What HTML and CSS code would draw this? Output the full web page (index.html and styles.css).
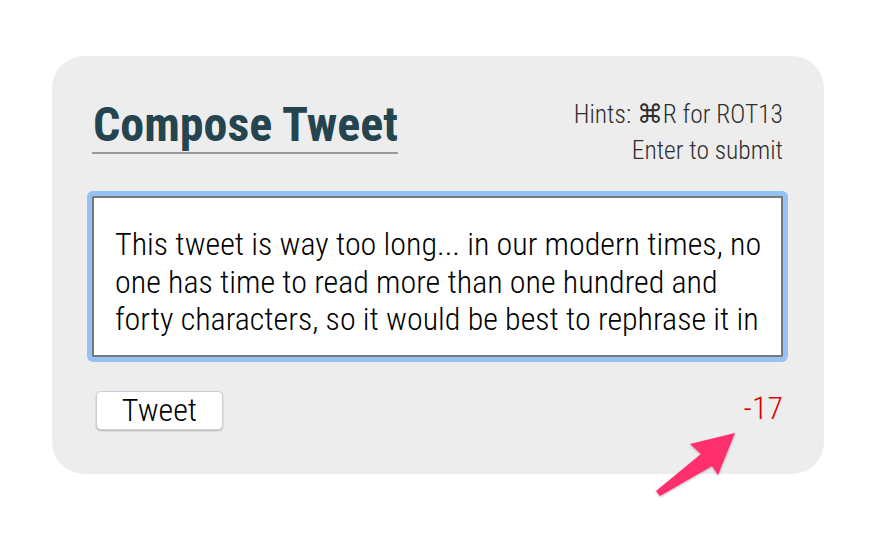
FILE: index.html
```html
<!DOCTYPE html>
<html>
<head>
<meta charset="utf-8">
<link rel="stylesheet" href="styles.css">
</head>
<body>
<div class="card">
  <div class="header">
    <h1 class="title">Compose Tweet</h1>
    <div class="hints">Hints: ⌘R for ROT13<br>Enter to submit</div>
  </div>
  <div class="editor">This tweet is way too long... in our modern times, no<br>one has time to read more than one hundred and<br>forty characters, so it would be best to rephrase it in</div>
  <div class="footer">
    <button class="tweet-btn">Tweet</button>
    <span class="count">-17</span>
  </div>
</div>
<svg class="arrow" width="110" height="90" viewBox="640 420 110 90">
  <defs>
    <filter id="sh" x="-20%" y="-20%" width="140%" height="140%">
      <feDropShadow dx="0" dy="1" stdDeviation="1" flood-color="#000" flood-opacity="0.3"/>
    </filter>
  </defs>
  <polygon filter="url(#sh)" fill="#ff2d6d" points="735,433 690,444 701,454 656,491 660,496 712,466 718,475"/>
</svg>
</body>
</html>
```
FILE: styles.css
```css
html, body {
  margin: 0;
  padding: 0;
  background: #ffffff;
}
body {
  position: relative;
  width: 876px;
  height: 534px;
  overflow: hidden;
  padding-top: 56px;
  padding-left: 52px;
  box-sizing: border-box;
  font-family: "Roboto Condensed", "Roboto", sans-serif;
}
.card {
  width: 772px;
  height: 418px;
  box-sizing: border-box;
  background: #ededed;
  border-radius: 32px;
  padding: 40px 41px 44px 40px;
  display: flex;
  flex-direction: column;
}
.header {
  display: flex;
  justify-content: space-between;
  align-items: flex-start;
  flex-shrink: 0;
}
.title {
  margin: 2px 0 0 0;
  font-size: 48px;
  font-weight: 700;
  line-height: 54px;
  color: #24444f;
  border-bottom: 2px solid #999999;
  padding: 0 0 0 1px;
}
.hints {
  text-align: right;
  font-size: 25.5px;
  font-weight: 300;
  line-height: 36px;
  color: #2e2e2e;
}
.editor {
  flex-shrink: 0;
  margin-top: 28px;
  background: #ffffff;
  border: 2px solid #777777;
  outline: 5px solid #94c2f3;
  border-radius: 1px;
  height: 161px;
  box-sizing: border-box;
  padding: 28px 20px 0 21px;
  font-size: 32px;
  font-weight: 300;
  line-height: 37.5px;
  color: #000000;
  white-space: nowrap;
  overflow: hidden;
}
.footer {
  flex-shrink: 0;
  margin-top: 34px;
  display: flex;
  justify-content: space-between;
  align-items: flex-start;
  padding-left: 4px;
}
.tweet-btn {
  width: 127px;
  height: 39px;
  background: #ffffff;
  border: 1px solid #cfcfcf;
  border-radius: 5px;
  box-shadow: 0 1px 2px rgba(0,0,0,0.25);
  font-family: "Roboto Condensed", "Roboto", sans-serif;
  font-size: 32px;
  font-weight: 300;
  color: #000000;
  padding: 0;
  line-height: 37px;
}
.count {
  font-size: 32px;
  font-weight: 300;
  color: #e00000;
  line-height: 34px;
}
.arrow {
  position: absolute;
  left: 640px;
  top: 420px;
}
```
